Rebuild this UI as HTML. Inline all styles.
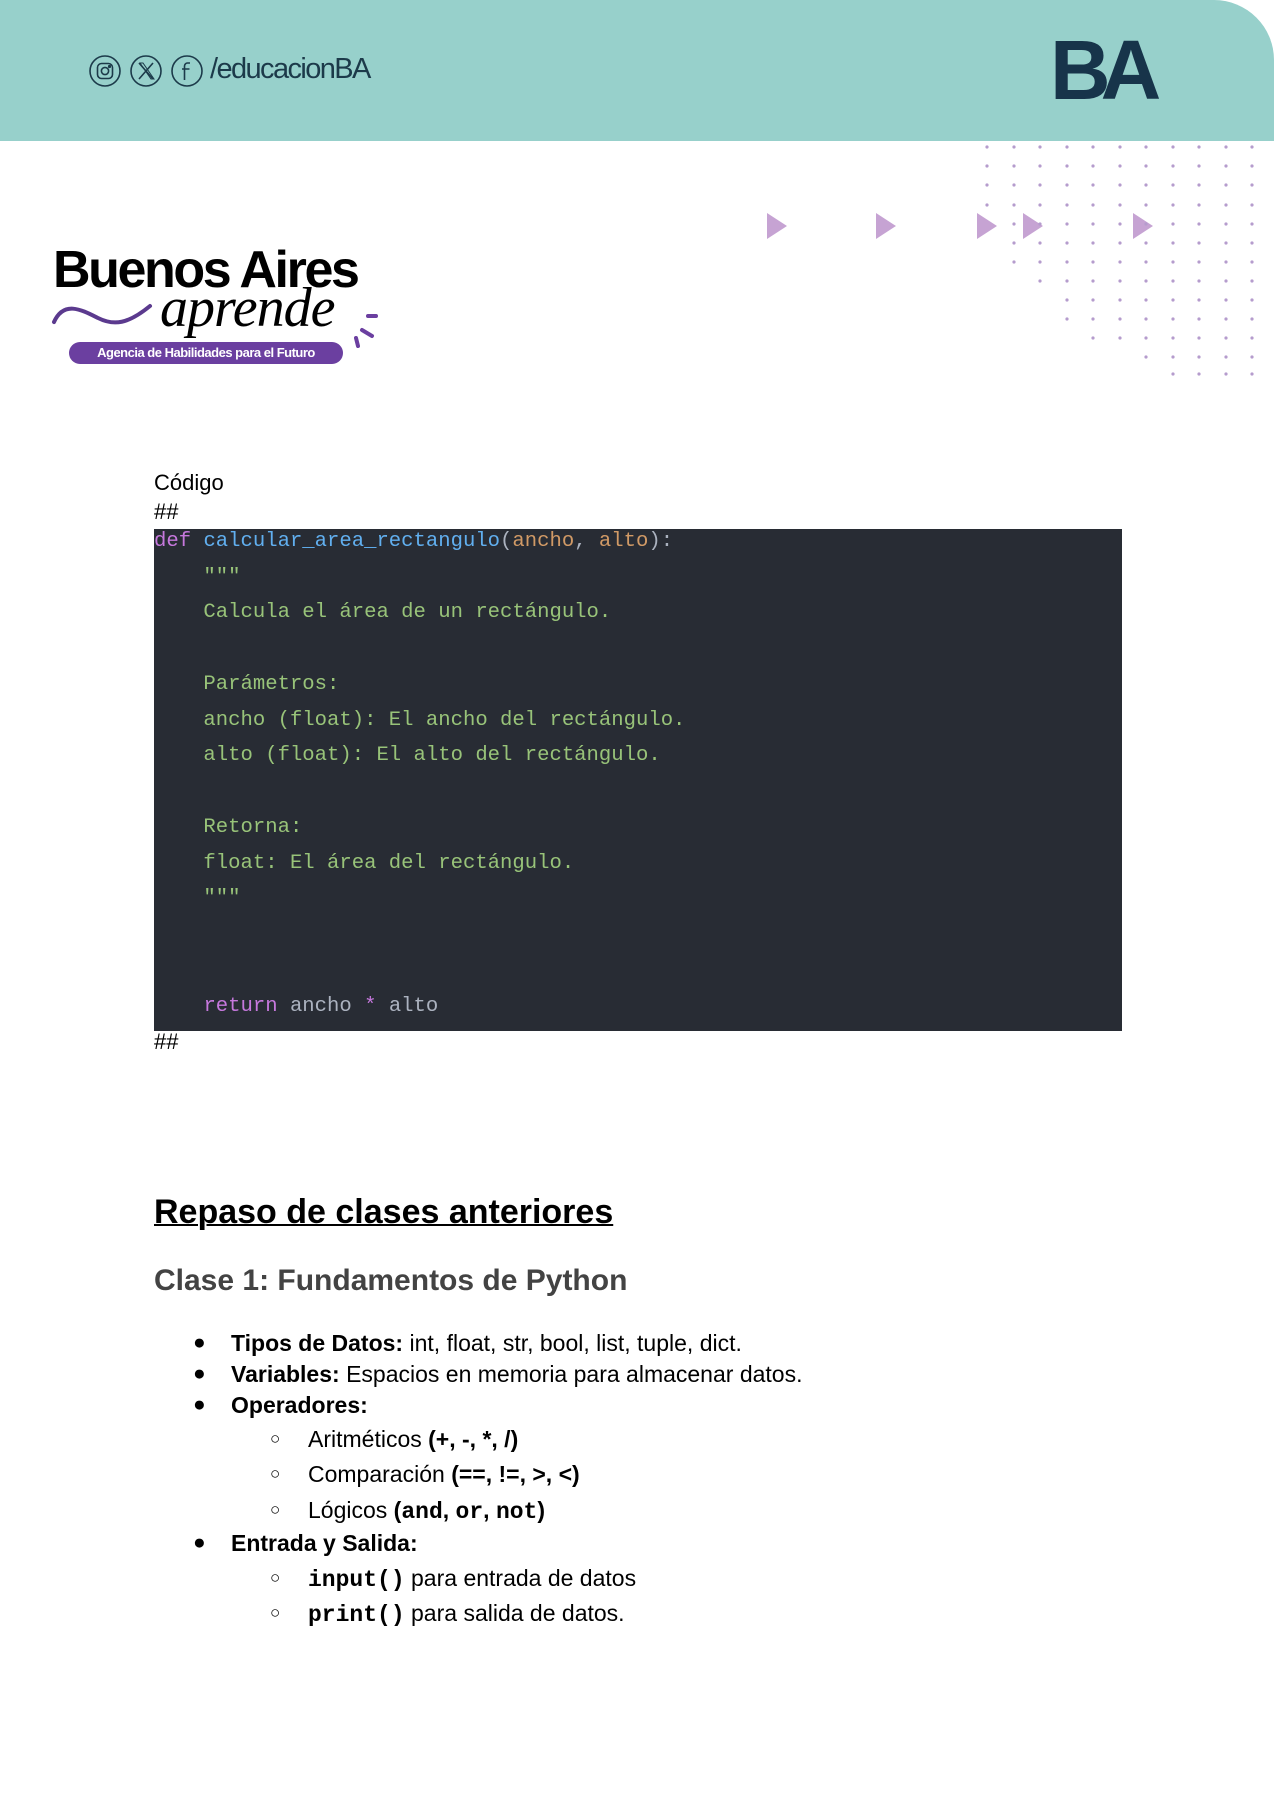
<!DOCTYPE html>
<html><head><meta charset="utf-8"><style>
*{margin:0;padding:0;box-sizing:border-box}
body{width:1274px;height:1800px;background:#fff;position:relative;overflow:hidden;font-family:"Liberation Sans",Arial,sans-serif;color:#000}
.a{position:absolute;white-space:nowrap}
.hdr{position:absolute;left:0;top:0;width:1274px;height:141px;background:#97d0cb;border-top-right-radius:60px}
.code{position:absolute;left:154px;top:529px;width:968px;height:502px;background:#282c34}
.cl{position:absolute;left:0;font-family:"Liberation Mono",monospace;font-size:20.6px;white-space:pre;line-height:24px;color:#abb2bf}
.k{color:#c678dd}.f{color:#61afef}.p{color:#d19a66}.s{color:#98c379}
.li{position:absolute;font-size:23px;white-space:nowrap;line-height:26px}
.mono{font-family:"Liberation Mono",monospace;font-weight:bold}
</style></head><body>
<div class="hdr"></div>
<svg class="a" style="left:88px;top:54px" width="116" height="34" viewBox="0 0 116 34" fill="none" stroke="#1c3a4a" stroke-width="1.6">
<circle cx="17" cy="17" r="15"/><rect x="9.5" y="9.5" width="15" height="15" rx="4"/><circle cx="17" cy="17" r="3.6"/><circle cx="21.5" cy="12.5" r=".8" fill="#1c3a4a"/>
<circle cx="58" cy="17" r="15"/><path d="M51 9 L65 25 M65 9 L51 25"/><path d="M52 9 h3 l11 16 h-3z" stroke-width="1"/>
<circle cx="99" cy="17" r="15"/><path d="M102 9 h-2.5 a3 3 0 0 0-3 3 v14 M94 15 h7.5"/>
</svg>
<div class="a" style="left:210px;top:53px;font-size:29px;color:#1c3a4a;letter-spacing:-1.6px">/educacionBA</div>
<div class="a" style="left:1050px;top:28px;font-size:84px;font-weight:bold;color:#17344a;letter-spacing:-10px;line-height:84px">BA</div>
<svg class="a" style="left:0;top:0" width="1274" height="400">
<g fill="#c6a3d3">
<polygon points="767,213 767,239 787,226"/>
<polygon points="876,213 876,239 896,226"/>
<polygon points="977,213 977,239 997,226"/>
<polygon points="1023,213 1023,239 1043,226"/>
<polygon points="1133,213 1133,239 1153,226"/>
</g>
</svg>
<svg class="a" style="left:0;top:0" width="1274" height="400" fill="#b59ccd">
<g>
<circle cx="987" cy="147" r="1.6"/><circle cx="1014" cy="147" r="1.6"/><circle cx="1040" cy="147" r="1.6"/><circle cx="1067" cy="147" r="1.6"/><circle cx="1093" cy="147" r="1.6"/><circle cx="1120" cy="147" r="1.6"/><circle cx="1146" cy="147" r="1.6"/><circle cx="1173" cy="147" r="1.6"/><circle cx="1199" cy="147" r="1.6"/><circle cx="1226" cy="147" r="1.6"/><circle cx="1252" cy="147" r="1.6"/>
<circle cx="987" cy="166" r="1.6"/><circle cx="1014" cy="166" r="1.6"/><circle cx="1040" cy="166" r="1.6"/><circle cx="1067" cy="166" r="1.6"/><circle cx="1093" cy="166" r="1.6"/><circle cx="1120" cy="166" r="1.6"/><circle cx="1146" cy="166" r="1.6"/><circle cx="1173" cy="166" r="1.6"/><circle cx="1199" cy="166" r="1.6"/><circle cx="1226" cy="166" r="1.6"/><circle cx="1252" cy="166" r="1.6"/>
<circle cx="987" cy="185" r="1.6"/><circle cx="1014" cy="185" r="1.6"/><circle cx="1040" cy="185" r="1.6"/><circle cx="1067" cy="185" r="1.6"/><circle cx="1093" cy="185" r="1.6"/><circle cx="1120" cy="185" r="1.6"/><circle cx="1146" cy="185" r="1.6"/><circle cx="1173" cy="185" r="1.6"/><circle cx="1199" cy="185" r="1.6"/><circle cx="1226" cy="185" r="1.6"/><circle cx="1252" cy="185" r="1.6"/>
<circle cx="987" cy="205" r="1.6"/><circle cx="1014" cy="205" r="1.6"/><circle cx="1040" cy="205" r="1.6"/><circle cx="1067" cy="205" r="1.6"/><circle cx="1093" cy="205" r="1.6"/><circle cx="1120" cy="205" r="1.6"/><circle cx="1146" cy="205" r="1.6"/><circle cx="1173" cy="205" r="1.6"/><circle cx="1199" cy="205" r="1.6"/><circle cx="1226" cy="205" r="1.6"/><circle cx="1252" cy="205" r="1.6"/>
<circle cx="1014" cy="224" r="1.6"/><circle cx="1040" cy="224" r="1.6"/><circle cx="1067" cy="224" r="1.6"/><circle cx="1093" cy="224" r="1.6"/><circle cx="1120" cy="224" r="1.6"/><circle cx="1146" cy="224" r="1.6"/><circle cx="1173" cy="224" r="1.6"/><circle cx="1199" cy="224" r="1.6"/><circle cx="1226" cy="224" r="1.6"/><circle cx="1252" cy="224" r="1.6"/>
<circle cx="1014" cy="243" r="1.6"/><circle cx="1040" cy="243" r="1.6"/><circle cx="1067" cy="243" r="1.6"/><circle cx="1093" cy="243" r="1.6"/><circle cx="1120" cy="243" r="1.6"/><circle cx="1146" cy="243" r="1.6"/><circle cx="1173" cy="243" r="1.6"/><circle cx="1199" cy="243" r="1.6"/><circle cx="1226" cy="243" r="1.6"/><circle cx="1252" cy="243" r="1.6"/>
<circle cx="1014" cy="262" r="1.6"/><circle cx="1040" cy="262" r="1.6"/><circle cx="1067" cy="262" r="1.6"/><circle cx="1093" cy="262" r="1.6"/><circle cx="1120" cy="262" r="1.6"/><circle cx="1146" cy="262" r="1.6"/><circle cx="1173" cy="262" r="1.6"/><circle cx="1199" cy="262" r="1.6"/><circle cx="1226" cy="262" r="1.6"/><circle cx="1252" cy="262" r="1.6"/>
<circle cx="1040" cy="281" r="1.6"/><circle cx="1067" cy="281" r="1.6"/><circle cx="1093" cy="281" r="1.6"/><circle cx="1120" cy="281" r="1.6"/><circle cx="1146" cy="281" r="1.6"/><circle cx="1173" cy="281" r="1.6"/><circle cx="1199" cy="281" r="1.6"/><circle cx="1226" cy="281" r="1.6"/><circle cx="1252" cy="281" r="1.6"/>
<circle cx="1067" cy="300" r="1.6"/><circle cx="1093" cy="300" r="1.6"/><circle cx="1120" cy="300" r="1.6"/><circle cx="1146" cy="300" r="1.6"/><circle cx="1173" cy="300" r="1.6"/><circle cx="1199" cy="300" r="1.6"/><circle cx="1226" cy="300" r="1.6"/><circle cx="1252" cy="300" r="1.6"/>
<circle cx="1067" cy="319" r="1.6"/><circle cx="1093" cy="319" r="1.6"/><circle cx="1120" cy="319" r="1.6"/><circle cx="1146" cy="319" r="1.6"/><circle cx="1173" cy="319" r="1.6"/><circle cx="1199" cy="319" r="1.6"/><circle cx="1226" cy="319" r="1.6"/><circle cx="1252" cy="319" r="1.6"/>
<circle cx="1093" cy="338" r="1.6"/><circle cx="1120" cy="338" r="1.6"/><circle cx="1146" cy="338" r="1.6"/><circle cx="1173" cy="338" r="1.6"/><circle cx="1199" cy="338" r="1.6"/><circle cx="1226" cy="338" r="1.6"/><circle cx="1252" cy="338" r="1.6"/>
<circle cx="1146" cy="357" r="1.6"/><circle cx="1173" cy="357" r="1.6"/><circle cx="1199" cy="357" r="1.6"/><circle cx="1226" cy="357" r="1.6"/><circle cx="1252" cy="357" r="1.6"/>
<circle cx="1173" cy="374" r="1.6"/><circle cx="1199" cy="374" r="1.6"/><circle cx="1226" cy="374" r="1.6"/><circle cx="1252" cy="374" r="1.6"/>
</g>
</svg>
<!-- logo -->
<div class="a" style="left:53px;top:240px;font-size:52px;font-weight:bold;letter-spacing:-2.4px;line-height:60px">Buenos Aires</div>
<svg class="a" style="left:50px;top:290px" width="340" height="70" fill="none">
<path d="M4 32 C14 10 32 20 48 28 C64 36 78 34 100 16" stroke="#5b3a8e" stroke-width="4" stroke-linecap="round"/>
<path d="M318 26 h8 M312 40 l10 6 M306 48 l2 8" stroke="#6b3fa0" stroke-width="4" stroke-linecap="round"/>
</svg>
<div class="a" style="left:160px;top:278px;font-family:'Liberation Serif',serif;font-style:italic;font-size:56px;letter-spacing:-1px;line-height:60px">aprende</div>
<div class="a" style="left:69px;top:342px;width:274px;height:22px;border-radius:11px;background:#6b3fa0;color:#fff;font-size:13px;font-weight:bold;text-align:center;line-height:22px;letter-spacing:-0.5px">Agencia de Habilidades para el Futuro</div>

<div class="a" style="left:154px;top:470px;font-size:22px">Código</div>
<div class="a" style="left:154px;top:499px;font-size:22px">##</div>
<div class="code">
<div class="cl" style="top:1px"><span class="k">def</span> <span class="f">calcular_area_rectangulo</span>(<span class="p">ancho</span>, <span class="p">alto</span>):</div>
<div class="cl s" style="top:37px">    """</div>
<div class="cl s" style="top:72px">    Calcula el área de un rectángulo.</div>
<div class="cl s" style="top:144px">    Parámetros:</div>
<div class="cl s" style="top:180px">    ancho (float): El ancho del rectángulo.</div>
<div class="cl s" style="top:215px">    alto (float): El alto del rectángulo.</div>
<div class="cl s" style="top:287px">    Retorna:</div>
<div class="cl s" style="top:323px">    float: El área del rectángulo.</div>
<div class="cl s" style="top:358px">    """</div>
<div class="cl" style="top:466px">    <span class="k">return</span> ancho <span class="k">*</span> alto</div>
</div>
<div class="a" style="left:154px;top:1029px;font-size:22px">##</div>

<div class="a" style="left:154px;top:1193px;font-size:34px;font-weight:bold;text-decoration:underline;text-decoration-thickness:2px">Repaso de clases anteriores</div>
<div class="a" style="left:154px;top:1264px;font-size:30px;font-weight:bold;color:#434343">Clase 1: Fundamentos de Python</div>

<div class="li" style="left:193px;top:1330px;font-size:21px">●</div><div class="li" style="left:231px;top:1330px"><b>Tipos de Datos:</b> int, float, str, bool, list, tuple, dict.</div>
<div class="li" style="left:193px;top:1361px;font-size:21px">●</div><div class="li" style="left:231px;top:1361px"><b>Variables:</b> Espacios en memoria para almacenar datos.</div>
<div class="li" style="left:193px;top:1392px;font-size:21px">●</div><div class="li" style="left:231px;top:1392px"><b>Operadores:</b></div>
<div class="li" style="left:270px;top:1426px;font-size:17px">○</div><div class="li" style="left:308px;top:1426px">Aritméticos <b>(+, -, *, /)</b></div>
<div class="li" style="left:270px;top:1461px;font-size:17px">○</div><div class="li" style="left:308px;top:1461px">Comparación <b>(==, !=, &gt;, &lt;)</b></div>
<div class="li" style="left:270px;top:1497px;font-size:17px">○</div><div class="li" style="left:308px;top:1497px">Lógicos <b>(<span class="mono">and</span>, <span class="mono">or</span>, <span class="mono">not</span>)</b></div>
<div class="li" style="left:193px;top:1530px;font-size:21px">●</div><div class="li" style="left:231px;top:1530px"><b>Entrada y Salida:</b></div>
<div class="li" style="left:270px;top:1565px;font-size:17px">○</div><div class="li" style="left:308px;top:1565px"><span class="mono">input()</span> para entrada de datos</div>
<div class="li" style="left:270px;top:1600px;font-size:17px">○</div><div class="li" style="left:308px;top:1600px"><span class="mono">print()</span> para salida de datos.</div>
</body></html>
